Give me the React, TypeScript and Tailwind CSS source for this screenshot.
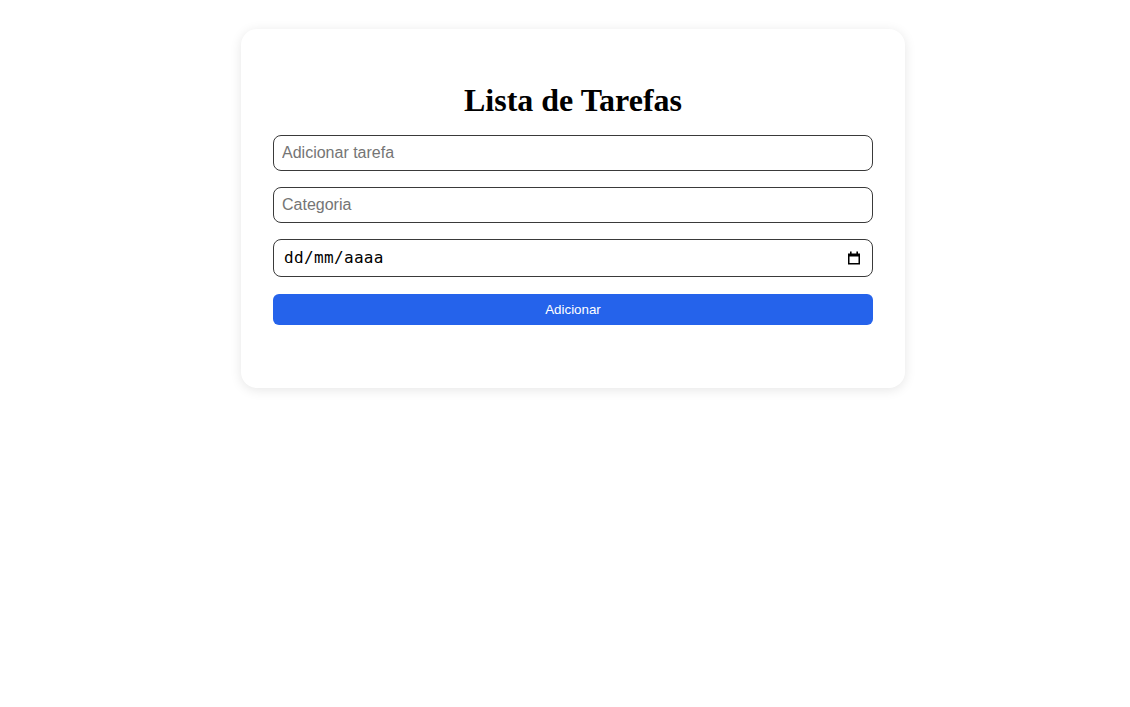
import { useState } from "react";

function CalendarIcon() {
  return (
    <svg width="14" height="14" viewBox="0 0 14 14" aria-hidden="true">
      <rect x="3" y="0.5" width="1.6" height="3" fill="#000" />
      <rect x="9.4" y="0.5" width="1.6" height="3" fill="#000" />
      <path d="M1 2.5h12v11H1z M2.5 5.5v6.5h9V5.5z" fill="#000" fillRule="evenodd" />
    </svg>
  );
}

export default function App() {
  const [task, setTask] = useState("");
  const [category, setCategory] = useState("");

  return (
    <div className="min-h-[707px] bg-white pt-[29px] pl-4 font-['Liberation_Sans',Arial,sans-serif]">
      {/* Card */}
      <div className="mx-auto w-[664px] rounded-2xl bg-white px-8 pt-8 pb-[63px] shadow-[0_2px_12px_rgba(0,0,0,0.1)]">
        <h1 className="mt-[21px] mb-4 text-center font-['Liberation_Serif','Times_New_Roman',serif] text-[32px] leading-[37px] font-bold text-black">
          Lista de Tarefas
        </h1>

        <div className="flex flex-col gap-4">
          <input
            type="text"
            value={task}
            onChange={(e) => setTask(e.target.value)}
            placeholder="Adicionar tarefa"
            className="h-9 w-full rounded-lg border border-[#3a3a3a] px-2 text-base text-black outline-none placeholder:text-[#757575]"
          />
          <input
            type="text"
            value={category}
            onChange={(e) => setCategory(e.target.value)}
            placeholder="Categoria"
            className="h-9 w-full rounded-lg border border-[#3a3a3a] px-2 text-base text-black outline-none placeholder:text-[#757575]"
          />
          {/* Date field (dd/mm/aaaa) */}
          <div className="flex h-[38px] w-full items-center justify-between rounded-lg border border-[#3a3a3a] pr-[11px] pl-[10px]">
            <span className="font-['DejaVu_Sans_Mono',monospace] text-base tracking-[0.35px] text-black">
              dd/mm/aaaa
            </span>
            <CalendarIcon />
          </div>
          <button
            type="button"
            className="mt-px h-[31px] w-full rounded-md bg-[#2563eb] text-[13.33px] text-white"
          >
            Adicionar
          </button>
        </div>
      </div>
    </div>
  );
}
